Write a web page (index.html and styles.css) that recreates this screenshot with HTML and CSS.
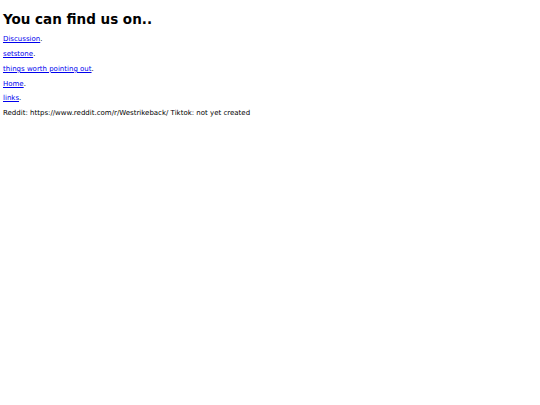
FILE: index.html
```html
<!DOCTYPE html>
<html>
<head>
<meta charset="utf-8">
<link rel="stylesheet" href="styles.css">
</head>
<body>
<h1 class="title">You can find us on..</h1>
<p class="line"><a href="#">Discussion</a>.</p>
<p class="line"><a href="#">setstone</a>.</p>
<p class="line"><a href="#">things worth pointing out</a>.</p>
<p class="line"><a href="#">Home</a>.</p>
<p class="line"><a href="#">links</a>.</p>
<p class="line">Reddit: https://www.reddit.com/r/Westrikeback/ Tiktok: not yet created</p>
</body>
</html>
```
FILE: styles.css
```css
body {
  margin: 0;
  padding: 0 3px;
  font-family: "DejaVu Sans", sans-serif;
  font-size: 7px;
  color: #000;
  background: #fff;
}
.title {
  font-size: 13.5px;
  font-weight: bold;
  margin: 11.1px 0 8.2px;
}
.line {
  margin: 0 0 6.8px;
}
.line a {
  color: #0000ee;
}
```
